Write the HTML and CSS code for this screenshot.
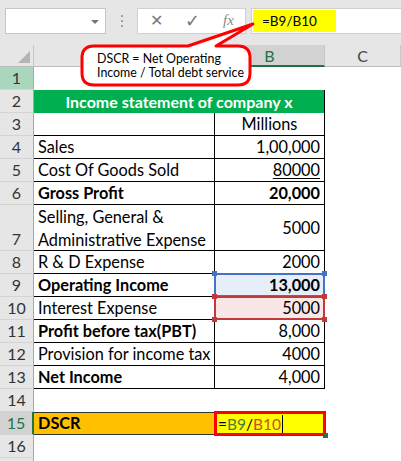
FILE: index.html
```html
<!DOCTYPE html>
<html>
<head>
<meta charset="utf-8">
<link rel="stylesheet" href="styles.css">
</head>
<body>
<div class="app">
  <div class="toolbar">
    <div class="namebox"><span class="dd"></span></div>
    <div class="grip"><i></i><i></i><i></i></div>
    <div class="btns">
      <span class="b-x">✕</span>
      <span class="b-ok">✓</span>
      <span class="b-fx">fx</span>
    </div>
    <div class="fbar"><span class="fhl">=B9/B10</span></div>
  </div>

  <div class="sheet">
    <div class="corner"><span class="tri"></span></div>
    <div class="ch"></div>
    <div class="ch ch-sel">B</div>
    <div class="ch">C</div>

    <div class="rh rh-1">1</div><div class="c"></div><div class="c"></div><div class="c"></div>

    <div class="rh">2</div><div class="c title">Income statement of company x</div><div class="c"></div>

    <div class="rh">3</div><div class="c t"></div><div class="c t ctr">Millions</div><div class="c"></div>

    <div class="rh">4</div><div class="c t">Sales</div><div class="c t num">1,00,000</div><div class="c"></div>

    <div class="rh">5</div><div class="c t">Cost Of Goods Sold</div><div class="c t num"><u class="ul">80000</u></div><div class="c"></div>

    <div class="rh">6</div><div class="c t b">Gross Profit</div><div class="c t num b">20,000</div><div class="c"></div>

    <div class="rh">7</div><div class="c t wrap">Selling, General &amp;<br>Administrative Expense</div><div class="c t num mid">5000</div><div class="c"></div>

    <div class="rh">8</div><div class="c t">R &amp; D Expense</div><div class="c t num">2000</div><div class="c"></div>

    <div class="rh">9</div><div class="c t b">Operating Income</div><div class="c t num b sel-blue"><span class="frame"></span><span class="h h-tl"></span><span class="h h-tr"></span>13,000</div><div class="c"></div>

    <div class="rh">10</div><div class="c t">Interest Expense</div><div class="c t num sel-red"><span class="frame"></span><span class="h h-tl"></span><span class="h h-tr"></span><span class="h h-bl"></span><span class="h h-br"></span>5000</div><div class="c"></div>

    <div class="rh">11</div><div class="c t b">Profit before tax(PBT)</div><div class="c t num">8,000</div><div class="c"></div>

    <div class="rh">12</div><div class="c t">Provision for income tax</div><div class="c t num">4000</div><div class="c"></div>

    <div class="rh">13</div><div class="c t b">Net Income</div><div class="c t num">4,000</div><div class="c"></div>

    <div class="rh">14</div><div class="c"></div><div class="c"></div><div class="c"></div>

    <div class="rh rh-sel">15</div><div class="c dscr b">DSCR</div><div class="c edit"><span class="eframe"></span><span class="fill"></span><span class="eq">=</span><span class="r1">B9</span><span class="eq">/</span><span class="r2">B10</span><span class="caret"></span></div><div class="c"></div>

    <div class="rh">16</div><div class="c"></div><div class="c"></div><div class="c"></div>

    <div class="rh"></div><div class="c"></div><div class="c"></div><div class="c"></div>
  </div>

  <div class="callout">
    <svg class="bubble" width="401" height="100" viewBox="0 0 401 100">
      <path d="M94 46 L188 46 L253 24 L216 46 L238 46 Q250 46 250 58 L250 73 Q250 85 238 85 L94 85 Q82 85 82 73 L82 58 Q82 46 94 46 Z" fill="#ffffff" stroke="#ff0000" stroke-width="3" stroke-linejoin="round"/>
    </svg>
    <div class="ctext">DSCR = Net Operating<br>Income / Total debt service</div>
  </div>
</div>
</body>
</html>
```

FILE: styles.css
```css
* { box-sizing: border-box; }
html, body { margin: 0; padding: 0; }
body {
  width: 401px;
  height: 461px;
  overflow: hidden;
  background: #ffffff;
  font-family: Lato, "Liberation Sans", sans-serif;
}
.app { position: relative; width: 401px; height: 461px; overflow: hidden; }

/* toolbar */
.toolbar {
  height: 45px;
  background: #e6e6e6;
  display: flex;
  align-items: flex-start;
  padding-top: 8px;
}
.namebox {
  margin-left: 5px;
  width: 101px;
  height: 26px;
  background: #fff;
  border: 1px solid #c6c6c6;
  position: relative;
}
.dd {
  position: absolute;
  right: 6px;
  top: 11px;
  width: 0; height: 0;
  border-left: 4px solid transparent;
  border-right: 4px solid transparent;
  border-top: 4px solid #777;
}
.grip {
  width: 31px;
  height: 26px;
  display: flex;
  flex-direction: column;
  align-items: center;
  justify-content: center;
  gap: 3px;
}
.grip i { display: block; width: 2px; height: 2px; background: #a0a0a0; }
.btns {
  width: 109px;
  height: 26px;
  background: #fff;
  border: 1px solid #d0d0d0;
  display: flex;
  align-items: center;
  position: relative;
}
.b-x { position: absolute; left: 12px; top: 2px; font-size: 16px; color: #777; font-family: "DejaVu Sans", sans-serif; }
.b-ok { position: absolute; left: 47px; top: 1px; font-size: 18px; color: #777; font-family: "DejaVu Sans", sans-serif; }
.b-fx { position: absolute; left: 85px; top: 3px; font-size: 15px; color: #888; font-style: italic; font-family: "Liberation Serif", serif; }
.fbar {
  margin-left: 5px;
  flex: 1;
  height: 26px;
  background: #fff;
  border: 1px solid #d0d0d0;
  border-right: none;
  padding: 1px 0 0 1px;
}
.fhl {
  display: block;
  width: 83px;
  height: 22px;
  background: #ffff00;
  padding-left: 9px;
  font-size: 13.5px;
  line-height: 22px;
  color: #000;
}

/* sheet */
.sheet {
  display: grid;
  grid-template-columns: 34px 181px 110px 76px;
  grid-template-rows: 22px repeat(6, 23px) 46px repeat(10, 23px);
  font-size: 16.3px;
  color: #000;
}
.corner {
  background: #e6e6e6;
  border-right: 1px solid #c8c8c8;
  border-bottom: 1px solid #bdbdbd;
  position: relative;
}
.tri {
  position: absolute;
  right: 3px;
  bottom: 3px;
  width: 0; height: 0;
  border-left: 12px solid transparent;
  border-bottom: 12px solid #b4b4b4;
}
.ch {
  background: #e6e6e6;
  border-right: 1px solid #c8c8c8;
  border-bottom: 1px solid #bdbdbd;
  text-align: center;
  line-height: 22px;
  color: #444;
  font-size: 16px;
}
.ch-sel {
  background: #d2d2d2;
  color: #217346;
  border-bottom: 2px solid #217346;
}
.rh {
  background: #e6e6e6;
  border-right: 1px solid #a8a8a8;
  border-bottom: 1px solid #d4d4d4;
  display: flex;
  align-items: flex-end;
  justify-content: center;
  line-height: 22px;
  color: #333;
  font-size: 16px;
}
.rh-1 { background: #a9d6bd; }
.rh-sel { background: #d2d2d2; color: #217346; border-right: 2px solid #217346; }

.c {
  display: flex;
  align-items: flex-end;
  padding: 0 4px;
  line-height: 22px;
  white-space: nowrap;
  position: relative;
}
.t { border-right: 1px solid #000; border-bottom: 1px solid #000; }
.num { justify-content: flex-end; }
.ctr { justify-content: center; }
.mid { align-items: center; }
.b { font-weight: bold; }
.wrap { display: block; line-height: 23px; }
.ul { text-decoration: underline; text-underline-offset: 2px; }

.title {
  grid-column: span 2;
  background: #00b050;
  color: #fff;
  font-weight: bold;
  font-size: 16px;
  justify-content: center;
  border-right: 1px solid #000;
}

.sel-blue { background: #e6eef9; }
.sel-red { background: #f9e7e7; }
.frame {
  position: absolute;
  left: -1px; top: -1px; right: -1px; bottom: -1px;
  border: 2px solid #4472c4;
  z-index: 1;
}
.sel-red .frame { border-color: #c0393b; }
.h {
  position: absolute;
  width: 5px; height: 5px;
  background: #4472c4;
  z-index: 2;
}
.sel-red .h { background: #c0393b; }
.h-tl { left: -3px; top: -3px; }
.h-tr { right: -3px; top: -3px; }
.h-bl { left: -3px; bottom: -3px; }
.h-br { right: -3px; bottom: -3px; }

.dscr {
  background: #ffc000;
  border-top: 1px solid #333;
  border-bottom: 1px solid #333;
}
.edit {
  background: #ffff00;
  padding-left: 3px;
  font-size: 15.5px;
}
.eframe {
  position: absolute;
  left: -1px; top: -1px; right: -1px; bottom: -1px;
  border: 3px solid #ff0000;
}
.fill {
  position: absolute;
  right: -3px; bottom: -3px;
  width: 5px; height: 5px;
  background: #217346;
}
.eq { color: #000; }
.r1 { color: #4b7b2f; }
.r2 { color: #c8502a; }
.caret {
  display: inline-block;
  width: 1px;
  height: 19px;
  background: #000;
  margin-left: 1px;
  margin-bottom: 1px;
}

/* callout */
.callout {
  position: absolute;
  left: 0; top: 0;
  width: 401px; height: 100px;
  pointer-events: none;
}
.bubble { position: absolute; left: 0; top: 0; }
.ctext {
  position: absolute;
  left: 97px;
  top: 52px;
  font-size: 12.4px;
  line-height: 14px;
  color: #000;
  white-space: nowrap;
}
```
